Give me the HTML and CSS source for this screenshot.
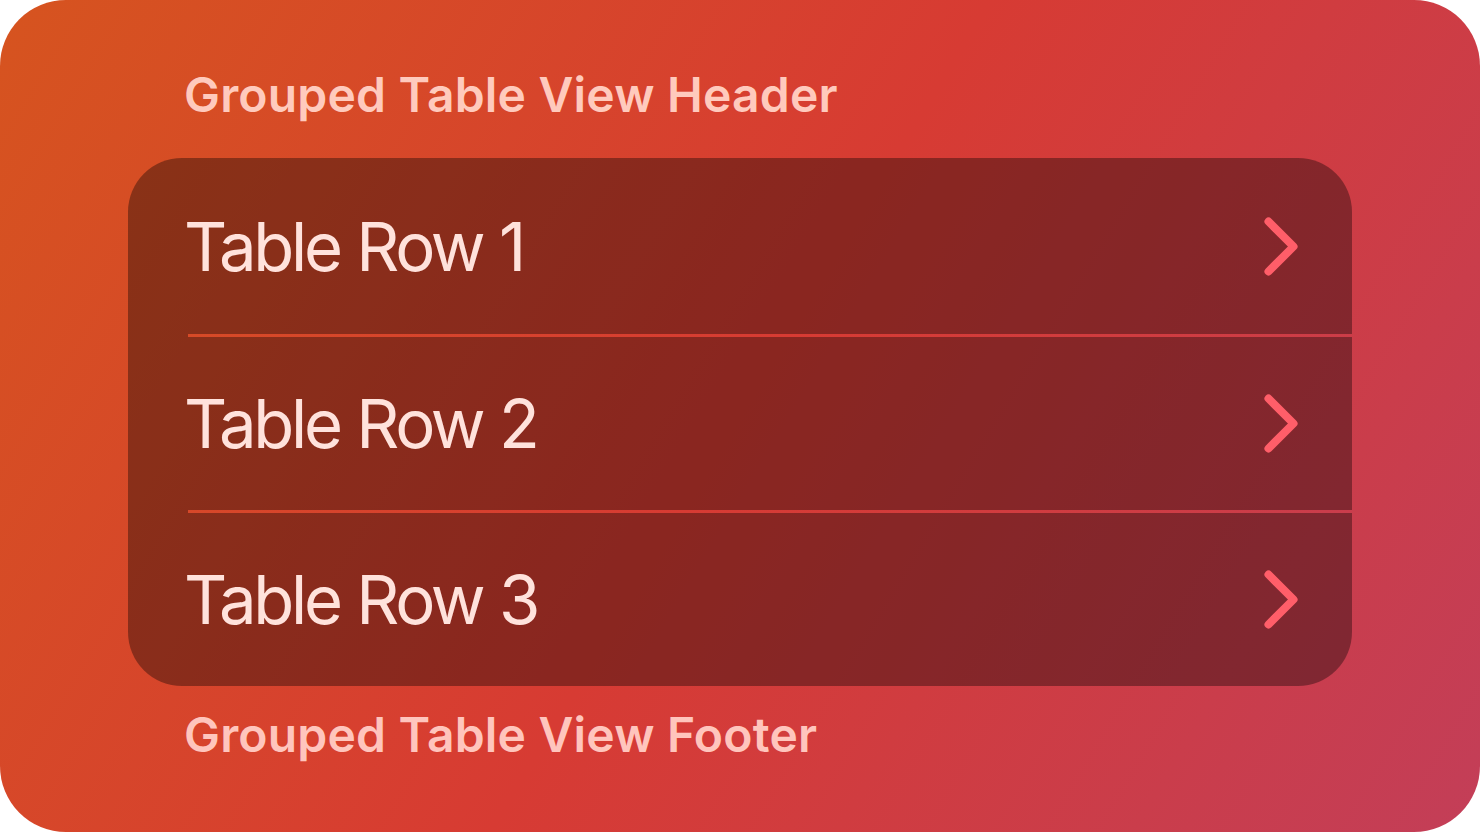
FILE: index.html
```html
<!DOCTYPE html>
<html lang="en">
<head>
<meta charset="utf-8">
<title>Grouped Table View</title>
<link rel="stylesheet" href="styles.css">
</head>
<body>
<div class="screen">
  <div class="section-header">Grouped Table View Header</div>
  <div class="group">
    <div class="row">
      <span class="row-title">Table Row 1</span>
      <svg class="chevron" width="34" height="59" viewBox="0 0 34 59"><polyline points="4.5,4.5 29.5,29.5 4.5,54.5"/></svg>
    </div>
    <div class="separator"></div>
    <div class="row row-short">
      <span class="row-title">Table Row 2</span>
      <svg class="chevron" width="34" height="59" viewBox="0 0 34 59"><polyline points="4.5,4.5 29.5,29.5 4.5,54.5"/></svg>
    </div>
    <div class="separator"></div>
    <div class="row row-short">
      <span class="row-title">Table Row 3</span>
      <svg class="chevron" width="34" height="59" viewBox="0 0 34 59"><polyline points="4.5,4.5 29.5,29.5 4.5,54.5"/></svg>
    </div>
  </div>
  <div class="section-footer">Grouped Table View Footer</div>
</div>
</body>
</html>
```

FILE: styles.css
```css
html, body {
  margin: 0;
  padding: 0;
  background: #ffffff;
}

body {
  width: 1480px;
  height: 832px;
  overflow: hidden;
  font-family: Inter, "Noto Sans", sans-serif;
}

.screen {
  width: 1480px;
  height: 832px;
  box-sizing: border-box;
  border-radius: 66px;
  padding: 66px 128px 0 128px;
  display: flex;
  flex-direction: column;
  background: linear-gradient(121deg, #d6541f 0%, #d73b33 50%, #c33e58 100%);
}

.section-header,
.section-footer {
  font-size: 48px;
  line-height: 58px;
  font-weight: 600;
  padding-left: 56px;
  letter-spacing: 0.2px;
}

.section-header {
  color: #ffcabd;
  margin-bottom: 34px;
}

.section-footer {
  color: #ffc5bd;
  margin-top: 20px;
}

.group {
  background: rgba(0, 0, 0, 0.355);
  border-radius: 54px;
  display: flex;
  flex-direction: column;
  overflow: hidden;
}

.row {
  height: 176px;
  display: flex;
  align-items: center;
  justify-content: space-between;
  padding: 0 54px 0 56px;
}

.row-short {
  height: 173px;
}

.row-title {
  font-size: 67px;
  font-weight: 400;
  color: #ffe2dc;
  letter-spacing: -3.3px;
  word-spacing: 1px;
}

.chevron {
  display: block;
  flex: none;
}

.chevron polyline {
  fill: none;
  stroke: #ff5e69;
  stroke-width: 8;
  stroke-linecap: round;
  stroke-linejoin: round;
}

.separator {
  height: 3px;
  margin-left: 60px;
  background: linear-gradient(121deg, #d6541f 0%, #d73b33 50%, #c33e58 100%);
  background-attachment: fixed;
  background-size: 1480px 832px;
}
```
